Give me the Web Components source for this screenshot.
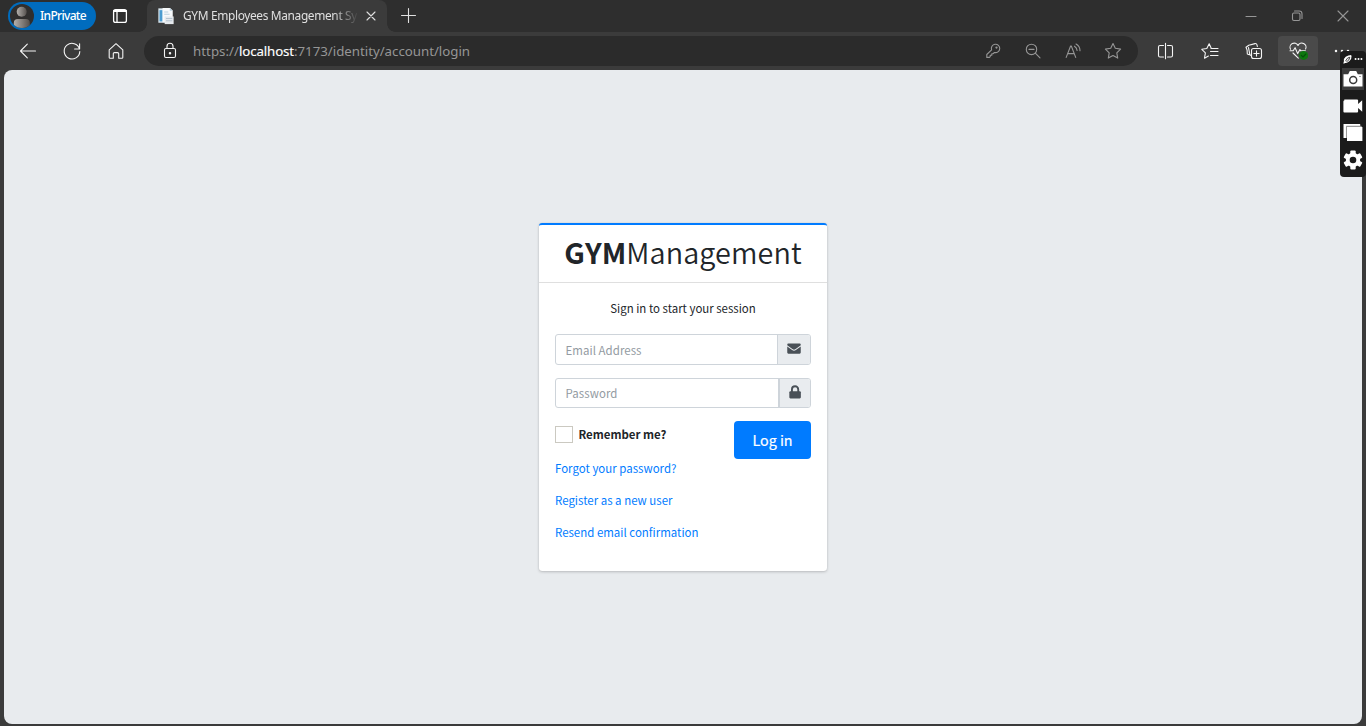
<!DOCTYPE html>
<html lang="en">
<head>
<meta charset="utf-8">
<title>GYM Employees Management System</title>
<style>
html,body{margin:0;height:100%;overflow:hidden;background:#3b3b3b}
body{font-family:"Noto Sans","Open Sans",sans-serif}
</style>
</head>
<body>
<browser-window>
  <tab-strip slot="tabs"></tab-strip>
  <nav-bar slot="nav"></nav-bar>
  <login-card></login-card>
</browser-window>
<capture-panel></capture-panel>
<script>
const define = (name, html, after) => customElements.define(name, class extends HTMLElement {
  connectedCallback() {
    if (this.shadowRoot) return;
    const t = document.createElement('template');
    t.innerHTML = html;
    this.attachShadow({mode: 'open'}).append(t.content.cloneNode(true));
    if (after) after(this);
  }
});

/* One line of text, tracked so that it fills the width given in "w". */
define('fit-text', `<style>:host{display:inline-block;white-space:pre;line-height:1.2}span{display:inline-block}</style><span><slot></slot></span>`, el => {
  const w = parseFloat(el.getAttribute('w'));
  const fit = () => {
    const s = el.shadowRoot.querySelector('span');
    s.style.letterSpacing = '0px';
    const now = s.getBoundingClientRect().width;
    if (now) s.style.letterSpacing = ((w - now) / el.textContent.length) + 'px';
  };
  el.style.width = w + 'px';
  requestAnimationFrame(fit);
});

const icons = {
  back: '<path d="M17.5 10H2.7M9.3 3.2L2.5 10l6.8 6.8"/>',
  reload: '<path d="M17.5 8A7.8 7.8 0 1 0 17.8 10.5M17.6 2.8V8H12.6"/>',
  home: '<path d="M3.2 8.8L10 2.7l6.8 6.1v7.6a.9.9 0 0 1-.9.9h-3.2v-4.5a1.2 1.2 0 0 0-1.2-1.2h-3a1.2 1.2 0 0 0-1.2 1.2v4.5H4.1a.9.9 0 0 1-.9-.9z"/>',
  lock: '<rect x="4.5" y="7.5" width="11" height="9" rx="1.4"/><path d="M7 7.3V5.2a3 3 0 0 1 6 0v2.1"/><circle cx="10" cy="12.2" r=".7" fill="currentColor"/>',
  panel: '<rect x="3.6" y="3.6" width="12.8" height="12.8" rx="2"/><path d="M3.6 5.4h12.8M7 6v10.4" /><path d="M4 4.9h12" stroke-width="2"/>',
  close: '<path d="M6 6l8 8M14 6l-8 8"/>',
  plus: '<path d="M10.5 3.5v14M3.5 10.5h14" transform="translate(0 -1)"/>',
  min: '<path d="M5 10.5h10"/>',
  restore: '<rect x="5.5" y="7" width="7.5" height="7.5" rx="1.4"/><path d="M7.5 5h4.7a2.8 2.8 0 0 1 2.8 2.8v4.7"/>',
  xwin: '<path d="M5 5l10 10M15 5L5 15"/>',
  key: '<path d="M8.6 8.9a4.2 4.2 0 1 1 2.8 2.6l-1.2 1.2H8.8v1.5H7.2v1.5L6.5 16.4H3.8v-2.9z"/><circle cx="13.5" cy="6.6" r=".6" fill="currentColor"/>',
  zoomout: '<circle cx="8.5" cy="8.4" r="5.2"/><path d="M12.3 12.2l4.7 4.7M6 8.4h5"/>',
  read: '<path d="M3.2 16.4L7.6 5h.7l4.4 11.4M4.8 12.6h6.4M11.5 5.2a5.5 5.5 0 0 1 2.6 4.3M13 3a7.5 7.5 0 0 1 4 6.7"/>',
  star: '<path d="M10 2.5l2.3 4.8 5.3.8-3.8 3.7.9 5.3-4.7-2.5-4.7 2.5.9-5.3L2.4 8.1l5.3-.8z"/>',
  split: '<path d="M7.5 4.5H4a1.5 1.5 0 0 0-1.5 1.5v8.5A1.5 1.5 0 0 0 4 16h3.5M11.5 4.5H15A1.5 1.5 0 0 1 16.5 6v8.5A1.5 1.5 0 0 1 15 16h-3.5M9.5 2.3v15.5"/>',
  favs: '<path d="M11 6.8L9.2 2.8 6.8 7.5l-5 .8 3.6 3.6-.9 5.3 3.9-2.1M11 7.5h7M10.5 10.5h7.5M10.5 14.5h7.5"/>',
  collect: '<path d="M5.3 13.7l-2-.8-.2-3.8L2 6.2l2.8-2L11 2.6a1.8 1.8 0 0 1 2 1.3l.3 1.6M7.5 14.8l-1.6-1 -1.4-7.2"/><rect x="7.5" y="7.5" width="10" height="10" rx="2"/><path d="M12.5 9.9v5.2M9.9 12.5h5.2"/>',
  heart: '<path d="M2.5 8.3a4.2 4.2 0 0 1 7.5-3.9 4.2 4.2 0 0 1 7.6 3.6M2 9.8h3.2l1.9-3.1 2.6 5.9 2.2-4 .9 1.2h4.6M5 12l5.3 5.2"/><circle cx="15.6" cy="14.4" r="4.5" fill="#0e780e" stroke="none"/><path stroke="#064f0b" d="M13.4 14.4l1.6 1.6 2.9-3"/>',
  more: '<g fill="currentColor" stroke="none"><circle cx="4" cy="10" r="1.25"/><circle cx="10" cy="10" r="1.25"/><circle cx="16" cy="10" r="1.25"/></g>',
  dots: '<g fill="currentColor" stroke="none"><circle cx="3.5" cy="9" r="2.2"/><circle cx="10" cy="9" r="2.2"/><circle cx="16.5" cy="9" r="2.2"/></g>',
  mail: '<g fill="currentColor" stroke="none"><path d="M2.5 5.2Q2.5 4 3.7 4h12.6q1.2 0 1.2 1.2v.6l-6.1 4.5q-1.4.9-2.8 0L2.5 5.8z"/><path d="M2.5 7.1l5.4 4.1q2.1 1.3 4.2 0l5.4-4.1V14q0 1.2-1.2 1.2H3.7q-1.2 0-1.2-1.2z"/></g>',
  padlock: '<rect x="3.7" y="8" width="12.8" height="8" rx="1.2" fill="currentColor" stroke="none"/><path d="M6.6 8.5V6a3.5 3.5 0 0 1 7 0v2.5" stroke-width="2.1"/>',
  camera: '<path fill="currentColor" stroke="none" d="M.5 5.2h4.7L6.8 2h6.4l1.6 3.2h4.7v12.3H.5z"/><circle cx="10.2" cy="11" r="3.5" stroke="#3b3b3b" stroke-width="1.5"/><circle cx="17" cy="7.5" r=".6" fill="#333" stroke="none"/>',
  video: '<path fill="currentColor" stroke="none" d="M1.3 3.5h12.8q1 0 1 1v3.4l4.1-3.6v11.4l-4.1-3.6v3.4q0 1-1 1H1.3q-.9 0-.9-1v-10q0-1 .9-1z"/>',
  stack: '<path fill="currentColor" stroke="none" d="M.5 1h16.7v3H3.8v11H.5z"/><path d="M3.5 14.5V3.4h14.7" stroke="#999"/><path fill="currentColor" stroke="none" d="M4 4h15.4v14H4z"/>',
  gear: '<g fill="currentColor" stroke="none"><rect x="7.3" y=".5" width="5.4" height="19" rx="1"/><rect x="7.3" y=".5" width="5.4" height="19" rx="1" transform="rotate(60 10 10)"/><rect x="7.3" y=".5" width="5.4" height="19" rx="1" transform="rotate(120 10 10)"/><circle cx="10" cy="10" r="7.2"/></g><circle cx="10" cy="10" r="3.3" fill="#1b1b1b" stroke="none"/>',
  pin: '<path fill="currentColor" stroke="none" d="M1 18l1-4V9l4-5 6-3 6-1 1 3-1 6-4 5-6 4H4l-2 2z"/><path stroke="#1b1b1b" stroke-width="1.8" d="M6 13l4-6 5-2-2 6-5 4"/>',
  doc: '<g stroke="none"><path fill="#dce9f2" d="M1.5 1.5h11v16h-11z"/><path fill="#4a9bd0" d="M2.8 3.5h3.4v12.5H2.8z"/><path fill="#f7f9fb" d="M6.2 1h8.3l3 3V17H6.2z"/><path fill="#b8cfdf" d="M14.2 1v3.2h3.2zM8 5h4.5v1H8zM8 7.5h6v1H8z"/><path fill="#e5e9ed" d="M8.5 10.5h10V19h-10z"/><path fill="#b6c4d0" d="M10 12.2h7v1h-7zM10 14.7h7v1h-7z"/></g>'
};
customElements.define('ui-icon', class extends HTMLElement {
  connectedCallback() {
    if (this.shadowRoot) return;
    const s = this.getAttribute('size') || 20, k = this.getAttribute('stroke') || 1.1;
    this.attachShadow({mode: 'open'}).innerHTML = `<style>:host{display:inline-flex;width:${s}px;height:${s}px;flex:none}svg{display:block}</style><svg width="${s}" height="${s}" viewBox="0 0 20 20" fill="none" stroke="currentColor" stroke-width="${k}" stroke-linecap="round" stroke-linejoin="round">${icons[this.getAttribute('name')]}</svg>`;
  }
});

define('browser-window', `<style>
:host{display:grid;grid-template-rows:32px 38px 1fr;box-sizing:border-box;height:726px;width:1366px;background:#3b3b3b}
main{margin:0 4px 2px;border-radius:8px;background:#e8ebee;display:flex;justify-content:center;align-items:flex-start;padding-top:153px}
</style><slot name="tabs"></slot><slot name="nav"></slot><main><slot></slot></main>`);

define('tab-strip', `<style>
:host{display:flex;height:32px;background:#2e2e2e;color:#e0e0e0;font-size:12px;align-items:stretch}
.who{display:flex;align-items:center;gap:6px;margin:2px 0 0 8px;width:88px;height:28px;border-radius:14px;background:#006cbe;color:#fff;font-weight:500;box-sizing:border-box;padding-left:2px}
.who svg{flex:none}
.pane{display:flex;align-items:center;width:48px;justify-content:center;color:#fff}
.tab{display:flex;align-items:center;width:240px;margin-left:3px;background:#3b3b3b;border-radius:8px 8px 0 0;box-sizing:border-box;padding-left:10px;position:relative;font-size:11.9px}
.tab::before,.tab::after{content:"";position:absolute;bottom:0;width:8px;height:8px}
.tab::before{left:-8px;background:radial-gradient(circle at 0 0,transparent 7.5px,#3b3b3b 8px)}
.tab::after{right:-8px;background:radial-gradient(circle at 100% 0,transparent 7.5px,#3b3b3b 8px)}
.title{margin-left:8px;padding-bottom:2px;width:174px;-webkit-mask-image:linear-gradient(90deg,#000 86%,transparent 101%);mask-image:linear-gradient(90deg,#000 86%,transparent 101%);overflow:hidden;white-space:nowrap}
.tab ui-icon:last-child{margin-left:4px}
.new{display:flex;align-items:center;margin-left:11px}
.win{margin-left:auto;display:flex;align-items:center;color:#969696}
.win ui-icon{padding:0 13px}
</style>
<div class="who"><svg width="24" height="24" viewBox="0 0 24 24"><defs><linearGradient id="g"><stop offset="0" stop-color="#b4b0ac"/><stop offset="1" stop-color="#55504d"/></linearGradient><clipPath id="c"><circle cx="12" cy="12" r="12"/></clipPath></defs><circle cx="12" cy="12" r="12" fill="#302e2d"/><g clip-path="url(#c)" fill="url(#g)"><circle cx="11.7" cy="7.8" r="5"/><path d="M3.8 24v-5q0-4 4-4h8q4 0 4 4v5z"/></g></svg><fit-text w="46">InPrivate</fit-text></div>
<div class="pane"><ui-icon name="panel" stroke="1.3"></ui-icon></div>
<div class="tab"><ui-icon name="doc" size="18"></ui-icon><div class="title"><fit-text w="174">GYM Employees Management Sy</fit-text></div><ui-icon name="close"></ui-icon></div>
<div class="new"><ui-icon name="plus"></ui-icon></div>
<div class="win"><ui-icon name="min"></ui-icon><ui-icon name="restore"></ui-icon><ui-icon name="xwin"></ui-icon></div>`);

define('nav-bar', `<style>
:host{display:flex;height:38px;background:#3b3b3b;color:#f4f4f4;align-items:center}
.b{width:44px;height:30px;display:flex;align-items:center;justify-content:center;flex:none}
.left,.right{display:flex}.left{padding-left:6px;width:138px}
.url{display:flex;align-items:center;width:994px;height:30px;border-radius:15px;background:#2b2b2b;box-sizing:border-box;padding-left:16px;color:#969696;font-size:13.3px}
.url>ui-icon{color:#f4f4f4}
.url fit-text{padding-top:2px}
.url fit-text.first{margin-left:13px}
b{color:#fff;font-weight:400;-webkit-text-stroke:.15px #fff}
.tools{margin-left:auto;display:flex;padding-right:5px}
.tools .b{width:40px}
.right{padding-left:6px}
.on::before{content:"";position:absolute;inset:0 2px;border-radius:4px;background:#4a4a4a}
.on{position:relative}.on ui-icon{position:relative}
</style>
<div class="left"><div class="b"><ui-icon name="back"></ui-icon></div><div class="b"><ui-icon name="reload"></ui-icon></div><div class="b"><ui-icon name="home"></ui-icon></div></div>
<div class="url"><ui-icon name="lock"></ui-icon><fit-text class="first" w="46">https://</fit-text><fit-text w="55"><b>localhost</b></fit-text><fit-text w="176">:7173/identity/account/login</fit-text>
<div class="tools"><div class="b"><ui-icon name="key"></ui-icon></div><div class="b"><ui-icon name="zoomout"></ui-icon></div><div class="b"><ui-icon name="read"></ui-icon></div><div class="b"><ui-icon name="star"></ui-icon></div></div></div>
<div class="right"><div class="b"><ui-icon name="split"></ui-icon></div><div class="b"><ui-icon name="favs"></ui-icon></div><div class="b"><ui-icon name="collect"></ui-icon></div><div class="b on"><ui-icon name="heart"></ui-icon></div><div class="b"><ui-icon name="more"></ui-icon></div></div>`);

define('field-row', `<style>
:host{display:flex;box-sizing:border-box;width:256px;border:1px solid #ced4da;border-radius:3px;overflow:hidden;color:#939ba2;background:#fff}
.in{flex:1;display:flex;align-items:center;padding:2px 0 0 9.5px}
.ad{box-sizing:border-box;border-left:1px solid #ced4da;background:#e9ecef;color:#495057;display:flex;justify-content:center;padding-top:5px}
</style><div class="in"><slot></slot></div><div class="ad"><slot name="icon"></slot></div>`, el => {
  el.style.height = el.getAttribute('h') + 'px';
  const ad = el.shadowRoot.querySelector('.ad');
  ad.style.width = el.getAttribute('addon') + 'px';
  if (el.hasAttribute('thick')) ad.style.borderLeftWidth = '2px';
});

define('login-card', `<style>
:host{display:block;width:288px;height:348px;box-sizing:border-box;border-top:2.4px solid #007bff;border-radius:3.2px;background:#fff;color:#212529;box-shadow:0 0 1px rgba(0,0,0,.13),0 1px 3px rgba(0,0,0,.2);font-family:"Noto Sans CJK SC","Noto Sans CJK JP",sans-serif;font-size:11.45px}
header{height:58px;box-sizing:border-box;border-bottom:1px solid #dfdfdf;display:flex;justify-content:center;align-items:center;font-size:28.8px;font-weight:350;padding-bottom:3px}
header b{font-weight:700}
.body{padding:0 16px;display:flex;flex-direction:column;align-items:flex-start}
.msg{align-self:center;margin:18px 0 18px;height:15px;line-height:15px}
field-row{margin-bottom:13px}
.row{display:flex;width:100%;height:38px;justify-content:space-between}
label{display:flex;height:17px;margin-top:5px;align-items:center;font-weight:700;gap:5.4px}
i{width:18px;height:17px;box-sizing:border-box;border:1px solid #cbc9c1;background:#fff}
button{width:77px;height:38px;border:0;border-radius:4px;background:#007bff;color:#fff;font:400 14.3px "Noto Sans CJK SC",sans-serif;padding:0 0 2px;-webkit-text-stroke:.2px #fff}
.links{display:flex;flex-direction:column;gap:17px;margin-top:2px;color:#007bff}
.links fit-text{height:15px;line-height:15px}
</style>
<header><fit-text w="62"><b>GYM</b></fit-text><fit-text w="175.5">Management</fit-text></header>
<div class="body">
<div class="msg"><fit-text w="145.5">Sign in to start your session</fit-text></div>
<field-row h="31" addon="33"><fit-text w="76">Email Address</fit-text><ui-icon slot="icon" name="mail" size="18"></ui-icon></field-row>
<field-row h="30" addon="32" thick><fit-text w="52">Password</fit-text><ui-icon slot="icon" name="padlock" size="18"></ui-icon></field-row>
<div class="row"><label><i></i><fit-text w="88">Remember me?</fit-text></label><button><fit-text w="40">Log in</fit-text></button></div>
<div class="links"><fit-text w="121.5">Forgot your password?</fit-text><fit-text w="117.5">Register as a new user</fit-text><fit-text w="143.5">Resend email confirmation</fit-text></div>
</div>`);

define('capture-panel', `<style>
:host{position:absolute;left:1340px;top:51px;width:26px;height:126px;background:#1b1b1b;border-radius:4px;color:#fff;display:flex;flex-direction:column;align-items:center}
.top{display:flex;height:17px;align-items:center;gap:2px}
.c{width:22px;height:22px;display:flex;align-items:center;justify-content:center;margin-bottom:5px}
.c.on{background:#3b3b3b}
</style><div class="top"><ui-icon name="pin" size="9"></ui-icon><ui-icon name="dots" size="9"></ui-icon></div>
<div class="c on"><ui-icon name="camera"></ui-icon></div><div class="c"><ui-icon name="video"></ui-icon></div><div class="c"><ui-icon name="stack"></ui-icon></div><div class="c"><ui-icon name="gear"></ui-icon></div>`);
</script>
</body>
</html>
